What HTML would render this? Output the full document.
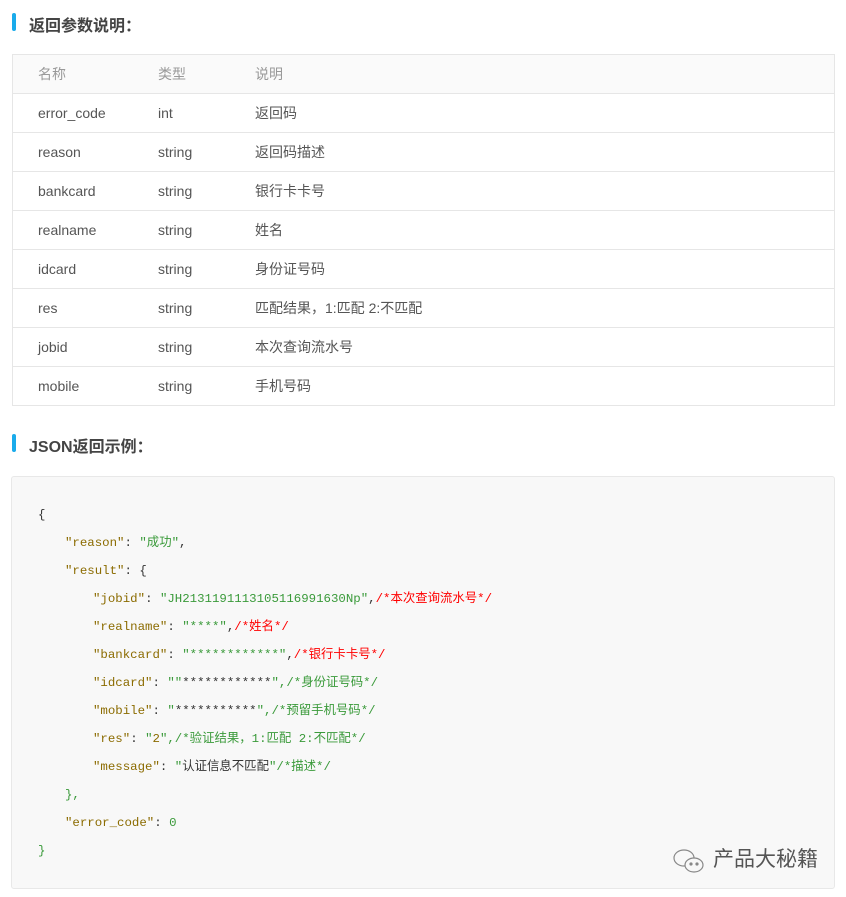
<!DOCTYPE html>
<html><head><meta charset="utf-8"><style>
body{margin:0;background:#fff;width:846px;height:897px;overflow:hidden;font-family:"Liberation Sans","Noto Sans CJK SC",sans-serif;}
.h{position:absolute;left:29px;font-size:16px;font-weight:bold;color:#444;}
.bar{position:absolute;left:12px;width:4px;height:18px;background:#1aabeb;border-radius:2px;}
table{position:absolute;left:12px;top:54px;width:823px;border-collapse:collapse;table-layout:fixed;font-size:14px;color:#555;border-left:1px solid #e6e6e6;border-right:1px solid #e6e6e6;}
td{height:38px;border:1px solid #e6e6e6;border-left:none;border-right:none;padding:0;}
tr td:first-child{padding-left:25px;width:120px;}
tr td:nth-child(2){width:97px;}
tr.hd td{background:#fafafa;color:#999;}
.code{position:absolute;left:11px;top:476px;width:822px;height:411px;background:#f8f8f8;border:1px solid #e8e8e8;border-radius:3px;font-family:"Liberation Mono","Noto Sans CJK SC",monospace;font-size:12.4px;color:#333;}
.l{position:absolute;white-space:pre;line-height:16px;}
.k{color:#8b6b00}.s{color:#3a9a3a}.c{color:#f00}.g{color:#3a9a3a}
</style></head><body>
<div class="bar" style="top:13px"></div><div class="h" style="top:12px">返回参数说明：</div>
<table>
<tr class="hd"><td>名称</td><td>类型</td><td>说明</td></tr>
<tr><td>error_code</td><td>int</td><td>返回码</td></tr>
<tr><td>reason</td><td>string</td><td>返回码描述</td></tr>
<tr><td>bankcard</td><td>string</td><td>银行卡卡号</td></tr>
<tr><td>realname</td><td>string</td><td>姓名</td></tr>
<tr><td>idcard</td><td>string</td><td>身份证号码</td></tr>
<tr><td>res</td><td>string</td><td>匹配结果，1:匹配 2:不匹配</td></tr>
<tr><td>jobid</td><td>string</td><td>本次查询流水号</td></tr>
<tr><td>mobile</td><td>string</td><td>手机号码</td></tr>
</table>
<div class="bar" style="top:434px"></div><div class="h" style="top:433px">JSON返回示例：</div>
<div class="code">
<div class="l" style="left:26px;top:30px">{</div>
<div class="l" style="left:53px;top:58px"><span class="k">"reason"</span>: <span class="s">"成功"</span>,</div>
<div class="l" style="left:53px;top:86px"><span class="k">"result"</span>: {</div>
<div class="l" style="left:81px;top:114px"><span class="k">"jobid"</span>: <span class="s">"JH2131191113105116991630Np"</span>,<span class="c">/*本次查询流水号*/</span></div>
<div class="l" style="left:81px;top:142px"><span class="k">"realname"</span>: <span class="s">"****"</span>,<span class="c">/*姓名*/</span></div>
<div class="l" style="left:81px;top:170px"><span class="k">"bankcard"</span>: <span class="s">"************"</span>,<span class="c">/*银行卡卡号*/</span></div>
<div class="l" style="left:81px;top:198px"><span class="k">"idcard"</span>: <span class="s">""</span>************<span class="s">",/*身份证号码*/</span></div>
<div class="l" style="left:81px;top:226px"><span class="k">"mobile"</span>: <span class="s">"</span>***********<span class="s">",/*预留手机号码*/</span></div>
<div class="l" style="left:81px;top:254px"><span class="k">"res"</span>: <span class="s">"</span><span class="k">2</span><span class="s">",/*验证结果，1:匹配 2:不匹配*/</span></div>
<div class="l" style="left:81px;top:282px"><span class="k">"message"</span>: <span class="s">"</span>认证信息不匹配<span class="s">"/*描述*/</span></div>
<div class="l g" style="left:53px;top:310px">},</div>
<div class="l" style="left:53px;top:338px"><span class="k">"error_code"</span>: <span class="s">0</span></div>
<div class="l g" style="left:26px;top:366px">}</div>
<svg style="position:absolute;left:660px;top:370px" width="36" height="30" viewBox="0 0 36 30" fill="none" stroke="#888" stroke-width="1.2"><ellipse cx="12" cy="11" rx="10" ry="8"/><ellipse cx="22" cy="18" rx="9" ry="7" fill="#f8f8f8"/><circle cx="19" cy="17" r="1" fill="#888"/><circle cx="25" cy="17" r="1" fill="#888"/></svg>
<div class="l" style="left:701px;top:370px;font-family:'Liberation Sans','Noto Sans CJK SC',sans-serif;font-size:21px;color:#555;line-height:26px">产品大秘籍</div>
</div>
</body></html>
